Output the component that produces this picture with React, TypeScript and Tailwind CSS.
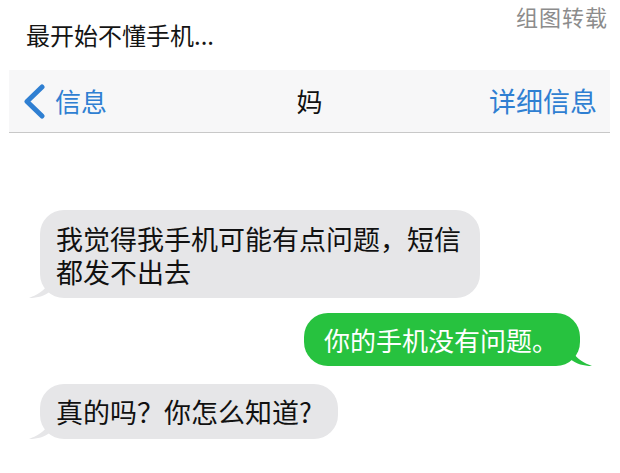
const font = { fontFamily: '"Noto Sans CJK SC", "Noto Sans", sans-serif' }

function Tail({ side, color }: { side: 'left' | 'right'; color: string }) {
  // little curled tail at the bubble's lower corner
  return (
    <svg
      width="22"
      height="22"
      viewBox="0 0 22 22"
      className={`absolute bottom-0 ${side === 'left' ? 'left-[-11px]' : 'right-[-12px] -scale-x-100'}`}
    >
      <path d="M20 0 C20 9 16 16 0 22 C9 22 15 20 22 15 L22 0 Z" fill={color} />
    </svg>
  )
}

function Bubble({
  text,
  mine,
  className,
}: {
  text: string
  mine?: boolean
  className?: string
}) {
  const color = mine ? '#27c23f' : '#e6e6e8'
  return (
    <div className={`flex ${mine ? 'justify-end pr-[40px]' : 'justify-start pl-[40px]'}`}>
      <div
        className={`relative rounded-[24px] leading-[33px] ${
          mine ? 'bg-[#27c23f] text-white' : 'bg-[#e6e6e8] text-[#111]'
        } ${className ?? ''}`}
      >
        <span className="relative z-10">{text}</span>
        <Tail side={mine ? 'right' : 'left'} color={color} />
      </div>
    </div>
  )
}

export default function App() {
  return (
    <div className="w-[620px] h-[473px] bg-white overflow-hidden" style={font}>
      {/* caption + credit */}
      <div className="flex justify-between items-start px-[26px] pr-[12px]">
        <p className="mt-[20px] text-[24px] leading-[30px] text-[#141414]">最开始不懂手机...</p>
        <p className="mt-[2px] text-[22px] leading-[28px] tracking-[1px] text-[#8c8c8c]">组图转载</p>
      </div>

      {/* nav bar */}
      <div className="mx-[9px] mt-[20px] w-[601px] h-[63px] bg-[#f7f7f8] border-b border-[#c8c8c8] grid grid-cols-3 items-center px-[13px]">
        <div className="flex items-center gap-[9px] text-[#2f7fd2] text-[26px] leading-[30px]">
          <svg width="24" height="35" viewBox="0 0 24 35">
            <polyline
              points="20,3 5,17.5 20,32"
              fill="none"
              stroke="#2f7fd2"
              strokeWidth="5"
              strokeLinecap="round"
              strokeLinejoin="round"
            />
          </svg>
          <span>信息</span>
        </div>
        <span className="justify-self-center text-[26px] leading-[30px] text-[#111]">妈</span>
        <span className="justify-self-end text-[27px] leading-[30px] text-[#2f7fd2]">详细信息</span>
      </div>

      {/* messages */}
      <div className="flex flex-col mt-[77px]">
        <Bubble
          className="w-[440px] text-[27px] pl-[16px] pr-[16px] pt-[12px] pb-[10px]"
          text="我觉得我手机可能有点问题，短信都发不出去"
        />
        <div className="mt-[15px]">
          <Bubble mine className="text-[26px] pl-[20px] pr-[22px] py-[10px]" text="你的手机没有问题。" />
        </div>
        <div className="mt-[18px]">
          <Bubble className="text-[27px] pl-[16px] pr-[26px] py-[11px]" text="真的吗？你怎么知道?" />
        </div>
      </div>
    </div>
  )
}
